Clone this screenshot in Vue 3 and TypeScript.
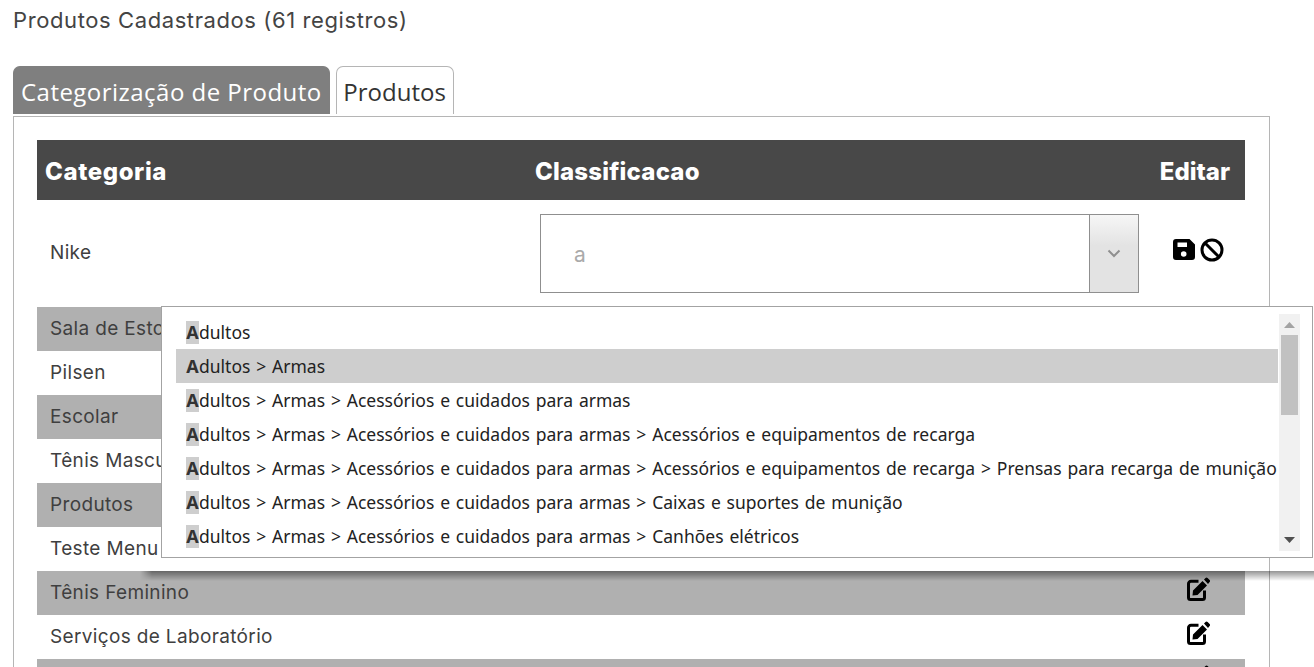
<script setup lang="ts">
const rows = [
  { name: 'Sala de Estoque', alt: true, edit: false },
  { name: 'Pilsen', alt: false, edit: false },
  { name: 'Escolar', alt: true, edit: false },
  { name: 'Tênis Masculino', alt: false, edit: false },
  { name: 'Produtos', alt: true, edit: false },
  { name: 'Teste Menu', alt: false, edit: false },
  { name: 'Tênis Feminino', alt: true, edit: true },
  { name: 'Serviços de Laboratório', alt: false, edit: true },
  { name: '', alt: true, edit: true },
]
const base = 'dultos > Armas > Acessórios e cuidados para armas'
const options = [
  'dultos',
  'dultos > Armas',
  base,
  base + ' > Acessórios e equipamentos de recarga',
  base + ' > Acessórios e equipamentos de recarga > Prensas para recarga de munição',
  base + ' > Caixas e suportes de munição',
  base + ' > Canhões elétricos',
]
</script>

<template>
  <div class="page">
    <h1 class="title">Produtos Cadastrados (61 registros)</h1>
    <div class="tabs">
      <div class="tab active">Categorização de Produto</div>
      <div class="tab">Produtos</div>
    </div>
    <div class="panel">
      <div class="head">
        <span class="c1">Categoria</span>
        <span class="c2">Classificacao</span>
        <span class="c3">Editar</span>
      </div>
      <div class="edit-row">
        <span class="c1 name">Nike</span>
        <div class="c2 combo-cell">
          <div class="combo">
            <span class="combo-text">a</span>
            <span class="combo-btn">
              <svg width="14" height="9" viewBox="0 0 14 9"><path d="M1.500 1.500 7 7l5.500-5.500" fill="none" stroke="#8f8f8f" stroke-width="2" /></svg>
            </span>
          </div>
        </div>
        <div class="c3 icons">
          <svg class="save" width="22" height="21" viewBox="0 0 22 21"><path fill-rule="evenodd" d="M3 0H16.500L22 5.500V18a3 3 0 0 1-3 3H3a3 3 0 0 1-3-3V3a3 3 0 0 1 3-3zM4.500 3.500V8H14V3.500zM10.700 12.200a2.800 2.800 0 1 0 0 5.600 2.800 2.800 0 0 0 0-5.600z" /></svg>
          <svg width="24" height="24" viewBox="0 0 24 24"><circle cx="12" cy="12" r="10" fill="none" stroke="#000" stroke-width="3" /><path d="M5 5l14 14" stroke="#000" stroke-width="3" /></svg>
        </div>
      </div>
      <div v-for="(r, i) in rows" :key="i" class="row" :class="{ alt: r.alt }">
        <span class="c1 name">{{ r.name }}</span>
        <span class="c3 pen">
          <svg v-if="r.edit" width="23" height="24" viewBox="0 0 23 24">
            <path d="M11.500 4.300H4a2.500 2.500 0 0 0-2.500 2.500v13.700a2 2 0 0 0 2 2h12a2 2 0 0 0 2-2V13.500" fill="none" stroke="#000" stroke-width="3" />
            <path d="M15.500 4l4.500 4.500L10.500 18l-5 .5.500-5zM17 2.500l1.500-1.500a1.500 1.500 0 0 1 2.100 0l2 2a1.500 1.500 0 0 1 0 2.100L21 7z" />
          </svg>
        </span>
      </div>
    </div>

    <div class="band"></div>
    <div class="popup">
      <ul class="list">
        <li v-for="(o, i) in options" :key="i" :class="{ hover: i === 1 }"><span class="hit">A</span>{{ o }}</li>
      </ul>
      <div class="scroll">
        <svg class="arr" width="11" height="6" viewBox="0 0 11 6"><path d="M5.500 0 11 6H0z" fill="#a3a3a3" /></svg>
        <div class="track"><div class="thumb"></div></div>
        <svg class="arr" width="11" height="6" viewBox="0 0 11 6"><path d="M0 0h11L5.500 6z" fill="#505050" /></svg>
      </div>
    </div>
  </div>
</template>

<style>
html, body { margin: 0; overflow: hidden; background: #fff; }
</style>

<style scoped>
.page {
  position: relative;
  width: 1314px;
  height: 667px;
  overflow: hidden;
  padding: 9px 0 0 13px;
  box-sizing: border-box;
  font-family: Inter, "Noto Sans", sans-serif;
  color: #3c3c3c;
}
.title {
  margin: 0;
  font-size: 22px;
  line-height: 23px;
  font-weight: 400;
  letter-spacing: 0.6px;
  color: #444;
}
.tabs {
  display: flex;
  gap: 6px;
  margin-top: 34px;
  height: 48px;
  font-family: "Open Sans", sans-serif;
  font-size: 24px;
}
.tab {
  box-sizing: border-box;
  height: 48px;
  padding: 0 6.5px;
  line-height: 49px;
  border: 1px solid #b5b5b5;
  border-bottom: 0;
  border-radius: 7px 7px 0 0;
  color: #333;
  letter-spacing: 0.05px;
}
.tab.active {
  padding: 0 7px;
  background: #7f7f7f;
  border-color: #7f7f7f;
  color: #fff;
  letter-spacing: 0.47px;
}
.panel {
  width: 1257px;
  height: 560px;
  box-sizing: border-box;
  margin-top: 2px;
  border: 1px solid #b5b5b5;
  padding: 23px 23px 0;
}
.head, .row, .edit-row { display: flex; align-items: center; width: 1208px; }
.head {
  height: 60px;
  padding-top: 2px;
  box-sizing: border-box;
  background: #484848;
  color: #fff;
  font-size: 24px;
  font-weight: 800;
}
.head .c1 { padding-left: 8px; letter-spacing: 0.6px; }
.head .c2 { padding-left: 9px; letter-spacing: 0.2px; }
.head .c3 { text-align: right; padding-right: 15px; letter-spacing: 0; }
.c1 { width: 489px; box-sizing: border-box; flex: none; }
.c2 { width: 611px; box-sizing: border-box; flex: none; }
.c3 { width: 108px; box-sizing: border-box; flex: none; }
.name {
  padding: 0 0 2px 13px;
  font-size: 19px;
  letter-spacing: 0.35px;
  color: #3f3f3f;
  white-space: nowrap;
}
.edit-row { height: 107px; align-items: flex-start; }
.edit-row .name { margin-top: 41px; }
.combo-cell { padding: 14px 0 0 14px; }
.combo {
  display: flex;
  width: 599px;
  height: 79px;
  box-sizing: border-box;
  border: 1px solid #8f8f8f;
}
.combo-text {
  flex: 1;
  padding: 27px 0 0 33px;
  font-family: Inter, sans-serif;
  font-size: 21px;
  line-height: 26px;
  color: #aaa;
}
.combo-btn {
  width: 48px;
  display: flex;
  align-items: center;
  justify-content: center;
  border-left: 1px solid #8f8f8f;
  background: linear-gradient(#f6f6f6, #e3e3e3 40%);
}
.icons { display: flex; align-items: flex-start; gap: 5px; padding: 38px 0 0 36px; }
.save { margin-top: 1px; }
.row { height: 44px; position: relative; }
.row.alt { background: #b0b0b0; }
.pen {
  display: flex;
  align-self: flex-start;
  padding: 6px 0 0 50px;
  margin-left: 611px;
}
.band {
  position: absolute;
  left: 140px;
  top: 571px;
  width: 1174px;
  height: 10px;
  background: linear-gradient(rgba(0,0,0,.42), rgba(0,0,0,0));
  -webkit-mask-image: linear-gradient(90deg, transparent, #000 12px);
  mask-image: linear-gradient(90deg, transparent, #000 12px);
}
.popup {
  position: absolute;
  left: 161px;
  top: 306px;
  width: 1152px;
  height: 252px;
  box-sizing: border-box;
  border: 1px solid #a3a3a3;
  background: #fff;
  display: flex;
}
.list {
  list-style: none;
  margin: 8px 0 0 14px;
  padding: 0;
  width: 1102px;
  font-family: "Noto Sans", sans-serif;
  font-size: 17.5px;
  word-spacing: 1.3px;
  color: #222;
  overflow: hidden;
}
.list li {
  height: 34px;
  line-height: 34px;
  padding-left: 10px;
  white-space: nowrap;
}
.list li.hover { background: #cecece; }
.hit {
  display: inline-block;
  width: 13px;
  height: 23px;
  line-height: 23px;
  text-align: center;
  background: #cecece;
  font-size: 18px;
  font-weight: 700;
  color: #333;
}
.scroll {
  width: 21px;
  height: 237px;
  margin: 7px 0 0 1px;
  background: #f1f1f1;
  display: flex;
  flex-direction: column;
  align-items: center;
  justify-content: space-between;
  padding: 8px 0;
  box-sizing: border-box;
}
.arr { flex: none; }
.track { flex: 1; width: 17px; margin: 7px 0 0; }
.thumb { height: 80px; background: #c1c1c1; }
</style>
